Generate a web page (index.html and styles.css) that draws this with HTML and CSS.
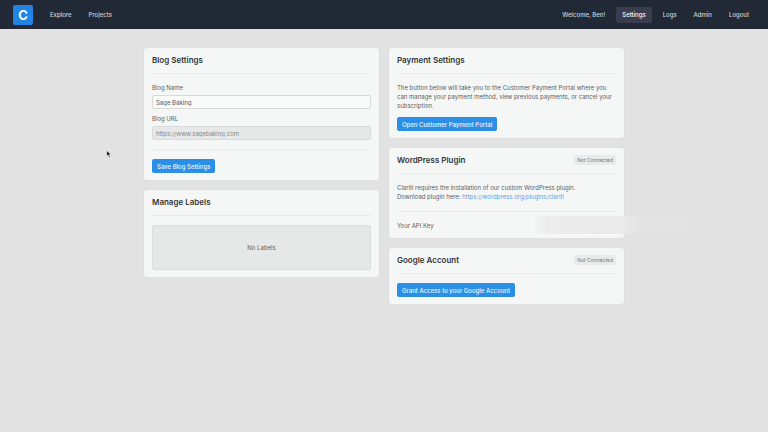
FILE: index.html
```html
<!DOCTYPE html>
<html lang="en">

<head>
    <meta charset="UTF-8">
    <meta name="viewport" content="width=device-width, initial-scale=1.0">
    <title>Settings</title>
    <link rel="stylesheet" href="styles.css">
</head>

<body>

    <!-- Top navigation -->
    <header class="navbar">
        <a class="logo" href="#">C</a>
        <nav class="nav-links">
            <a href="#">Explore</a>
            <a href="#">Projects</a>
        </nav>
        <nav class="nav-links nav-right">
            <span>Welcome, Ben!</span>
            <a class="active" href="#">Settings</a>
            <a href="#">Logs</a>
            <a href="#">Admin</a>
            <a href="#">Logout</a>
        </nav>
    </header>

    <main class="settings">
        <div class="column">
            <!-- Blog settings -->
            <section class="card">
                <div class="card-header">
                    <h2>Blog Settings</h2>
                </div>
                <form>
                    <div class="input-group">
                        <label for="blog-name">Blog Name</label>
                        <input type="text" id="blog-name" value="Sage Baking">
                    </div>
                    <div class="input-group">
                        <label for="blog-url">Blog URL</label>
                        <input type="text" id="blog-url" value="https://www.sagebaking.com" disabled>
                    </div>
                    <hr>
                    <button class="btn" type="button">Save Blog Settings</button>
                </form>
            </section>

            <!-- Labels -->
            <section class="card">
                <div class="card-header">
                    <h2>Manage Labels</h2>
                </div>
                <div class="empty">No Labels</div>
            </section>
        </div>

        <div class="column">
            <!-- Payment -->
            <section class="card">
                <div class="card-header">
                    <h2>Payment Settings</h2>
                </div>
                <p>The button below will take you to the Customer Payment Portal where you can manage your payment method, view previous payments, or cancel your subscription.</p>
                <button class="btn btn-after-text" type="button">Open Customer Payment Portal</button>
            </section>

            <!-- WordPress -->
            <section class="card">
                <div class="card-header">
                    <h2>WordPress Plugin</h2>
                    <span class="badge">Not Connected</span>
                </div>
                <p>Clariti requires the installation of our custom WordPress plugin.<br>
                    Download plugin here: <a href="#">https://wordpress.org/plugins/clariti</a></p>
                <hr>
                <div class="api-key">
                    <span>Your API Key</span>
                    <span class="key-mask"></span>
                </div>
            </section>

            <!-- Google -->
            <section class="card">
                <div class="card-header">
                    <h2>Google Account</h2>
                    <span class="badge">Not Connected</span>
                </div>
                <button class="btn" type="button">Grant Access to your Google Account</button>
            </section>
        </div>
    </main>

    <svg class="pointer" viewBox="0 0 10 14" aria-hidden="true">
        <path d="M1 1 L1 11 L3.4 8.9 L5.2 13 L7.2 12.1 L5.4 8.2 L8.6 8 Z" fill="#111" stroke="#fff" stroke-width="1" />
    </svg>

</body>

</html>
```

FILE: styles.css
```css
* {
    box-sizing: border-box;
    font-family: Inter, 'Liberation Sans', sans-serif;
}

body {
    margin: 0;
    min-height: 100vh;
    background: #e2e2e2;
    color: #5b5d60;
    font-size: 6px;
    line-height: 9px;
    overflow-x: hidden;
}

/* Navbar */
.navbar {
    display: flex;
    align-items: center;
    height: 29px;
    padding: 0 13px;
    background: #212936;
}

.logo {
    width: 20px;
    margin-right: 11px;
    border-radius: 2px;
    background: #2383e2;
    color: #f2f8ff;
    font-size: 13px;
    font-weight: 700;
    line-height: 20px;
    text-align: center;
    text-decoration: none;
}

.nav-links {
    display: flex;
    gap: 5px;
    font-weight: 500;
    line-height: 16px;
}

.nav-links a,
.nav-links span {
    padding: 0 6px;
    border-radius: 2px;
    color: #d0d3d8;
    text-decoration: none;
}

.nav-links .active {
    background: #3a3d4d;
    color: #fafafc;
}

.nav-right {
    margin-left: auto;
}

/* Two columns of cards */
.settings {
    display: grid;
    grid-template-columns: 1fr 1fr;
    gap: 10px;
    max-width: 480px;
    margin: 19px auto;
}

.column {
    display: flex;
    flex-direction: column;
    gap: 10px;
}

.card {
    padding: 7px 8px;
    border-radius: 3px;
    background: #f5f7f7;
    box-shadow: 0 0 2px rgba(0, 0, 0, 0.06);
}

.card-header {
    display: flex;
    align-items: center;
    justify-content: space-between;
    padding-bottom: 8px;
    margin-bottom: 9px;
    border-bottom: 1px solid #e9eaea;
}

h2 {
    margin: 0;
    color: #333538;
    font-size: 8px;
    font-weight: 600;
    line-height: 10px;
}

p {
    margin: 1px 0 0;
}

p a {
    color: #5a9fe8;
    text-decoration: none;
}

hr {
    margin: 9px 0;
    border: 0;
    border-top: 1px solid #e9eaea;
}

p + hr {
    margin-top: 10px;
}

.badge {
    padding: 0 3px;
    border-radius: 2px;
    background: #e9ebeb;
    color: #77797b;
    font-size: 5px;
    line-height: 10px;
}

/* Forms */
.input-group {
    display: flex;
    flex-direction: column;
    gap: 3px;
}

.input-group + .input-group {
    margin-top: 5px;
}

.input-group input {
    width: 100%;
    height: 14px;
    padding: 0 3px;
    border: 1px solid #d9dbdb;
    border-radius: 2px;
    background: #f8f9f9;
    color: #55575a;
    font-size: 6px;
}

.input-group input:disabled {
    background: #e7e9e9;
    color: #85878a;
}

.btn {
    display: block;
    height: 14px;
    padding: 0 5px;
    border: none;
    border-radius: 2px;
    background: #2b8fe6;
    color: #eef6fe;
    font-size: 6px;
    font-weight: 500;
    cursor: pointer;
}

.btn-after-text {
    margin-top: 7px;
}

.empty {
    display: flex;
    align-items: center;
    justify-content: center;
    height: 45px;
    border: 1px solid #dcdede;
    border-radius: 2px;
    background: #e6e7e7;
}

.api-key {
    position: relative;
    line-height: 10px;
}

/* Blurred key, runs past the edge of the card */
.key-mask {
    position: absolute;
    top: -5px;
    left: 138px;
    width: 216px;
    height: 18px;
    background: linear-gradient(90deg, #f3f4f4, #ececec 6%, #eaeaea 40%, #e6e6e6 45%, #e3e3e3 48%, #e2e2e2);
}

.pointer {
    position: absolute;
    top: 150px;
    left: 106px;
    width: 6px;
    height: 8px;
}
```
